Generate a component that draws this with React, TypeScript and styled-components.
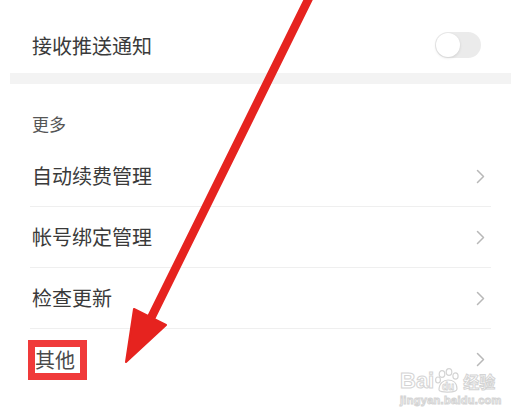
import React from "react";
import styled, { createGlobalStyle } from "styled-components";

const GlobalStyle = createGlobalStyle`
  html,
  body {
    margin: 0;
    padding: 0;
    background: #ffffff;
    overflow: hidden;
  }
  body {
    font-family: "Noto Sans CJK SC", "Noto Sans", sans-serif;
  }
`;

const Page = styled.div`
  position: relative;
  width: 521px;
  height: 411px;
  overflow: hidden;
  background: #ffffff;
`;

const Content = styled.div`
  margin-top: -21px;
`;

const SectionLabel = styled.div`
  padding: 0 32px;
  font-size: 17px;
  line-height: 24px;
  color: #9a9a9a;
`;

const ToggleRow = styled.div`
  display: flex;
  align-items: center;
  justify-content: space-between;
  height: 56px;
  margin-top: 14px;
  padding: 0 40px 0 32px;
  font-size: 20px;
  color: #3a3a3a;
`;

const Track = styled.div`
  display: flex;
  align-items: center;
  width: 46px;
  height: 26px;
  border-radius: 13px;
  background: #ebebeb;
  padding: 1px;
  box-sizing: border-box;
`;

const Knob = styled.div`
  width: 24px;
  height: 24px;
  border-radius: 50%;
  background: #ffffff;
  box-shadow: 0 1px 3px rgba(0, 0, 0, 0.12);
`;

const Band = styled.div`
  height: 11px;
  margin: 0 10px;
  background: #f3f3f3;
`;

const Header = styled.div`
  height: 62px;
  box-sizing: border-box;
  padding: 28px 32px 0 32px;
  font-size: 17px;
  line-height: 24px;
  color: #555555;
`;

const List = styled.div`
  margin: 0 30px;
`;

const Row = styled.div<{ $last?: boolean }>`
  display: flex;
  align-items: center;
  justify-content: space-between;
  height: 61px;
  box-sizing: border-box;
  padding: 0 6px 0 2px;
  border-bottom: ${({ $last }) => ($last ? "none" : "1px solid #efefef")};
  font-size: 20px;
  line-height: 26px;
  color: #3a3a3a;
`;

const Marked = styled.span`
  display: inline-block;
  margin-left: -4px;
  padding-right: 5px;
  border: 7px solid #f03a3a;
  line-height: 26px;
  background: #ffffff;
  color: #4a4a4a;
`;

const Overlay = styled.svg`
  position: absolute;
  left: 0;
  top: 0;
  pointer-events: none;
`;

const Watermark = styled.div`
  position: absolute;
  left: 400px;
  top: 368px;
  display: flex;
  flex-direction: column;
  align-items: flex-start;
  color: #ffffff;
  -webkit-text-stroke: 1px #d4d4d4;
  pointer-events: none;
`;

const MarkLine = styled.div`
  display: flex;
  align-items: center;
  font-family: "Liberation Sans", Arial, sans-serif;
  font-weight: bold;
  font-size: 22px;
  line-height: 24px;
`;

const MarkCjk = styled.span`
  font-family: "Noto Sans CJK SC", sans-serif;
  font-size: 16px;
  margin-left: 1px;
`;

const MarkUrl = styled.div`
  font-family: "Liberation Sans", Arial, sans-serif;
  font-weight: bold;
  font-size: 11px;
  line-height: 12px;
  letter-spacing: 0.3px;
`;

const Chevron = () => (
  <svg width="9" height="15" viewBox="0 0 9 15">
    <polyline
      points="1.5,1.5 7.5,7.5 1.5,13.5"
      fill="none"
      stroke="#b8b8b8"
      strokeWidth="1.5"
      strokeLinecap="round"
      strokeLinejoin="round"
    />
  </svg>
);

const Paw = () => (
  <svg width="28" height="26" viewBox="0 0 28 26">
    <g fill="#ffffff" stroke="#d4d4d4" strokeWidth="1.2">
      <ellipse cx="8" cy="6" rx="2.8" ry="3.4" />
      <ellipse cx="15" cy="4" rx="2.8" ry="3.4" />
      <ellipse cx="21.5" cy="8" rx="2.6" ry="3.2" />
      <ellipse cx="4" cy="12" rx="2.4" ry="3" />
      <path d="M5 22 C5 15 10 12 14 12 C19 12 23 15 23 21 C23 25 5 25 5 22 Z" />
    </g>
    <text
      x="14"
      y="22"
      textAnchor="middle"
      fontFamily="Liberation Sans, Arial, sans-serif"
      fontWeight="bold"
      fontSize="10"
      fill="#ffffff"
      stroke="#d4d4d4"
      strokeWidth="0.8"
    >
      du
    </text>
  </svg>
);

const items = ["自动续费管理", "帐号绑定管理", "检查更新"];

export default function App() {
  return (
    <Page>
      <GlobalStyle />
      <Content>
        <SectionLabel>通知</SectionLabel>
        <ToggleRow>
          <span>接收推送通知</span>
          <Track>
            <Knob />
          </Track>
        </ToggleRow>
        <Band />
        <Header>更多</Header>
        <List>
          {items.map((label) => (
            <Row key={label}>
              <span>{label}</span>
              <Chevron />
            </Row>
          ))}
          <Row $last>
            <Marked>其他</Marked>
            <Chevron />
          </Row>
        </List>
      </Content>

      <Watermark>
        <MarkLine>
          Bai
          <Paw />
          <MarkCjk>经验</MarkCjk>
        </MarkLine>
        <MarkUrl>jingyan.baidu.com</MarkUrl>
      </Watermark>

      <Overlay width="521" height="411" viewBox="0 0 521 411">
        <line
          x1="310"
          y1="-4"
          x2="151"
          y2="318"
          stroke="#e6231f"
          strokeWidth="8.5"
          strokeLinecap="round"
        />
        <polygon
          points="134,309 166,325 126,362"
          fill="#e6231f"
          stroke="#e6231f"
          strokeWidth="2"
          strokeLinejoin="round"
        />
      </Overlay>
    </Page>
  );
}
